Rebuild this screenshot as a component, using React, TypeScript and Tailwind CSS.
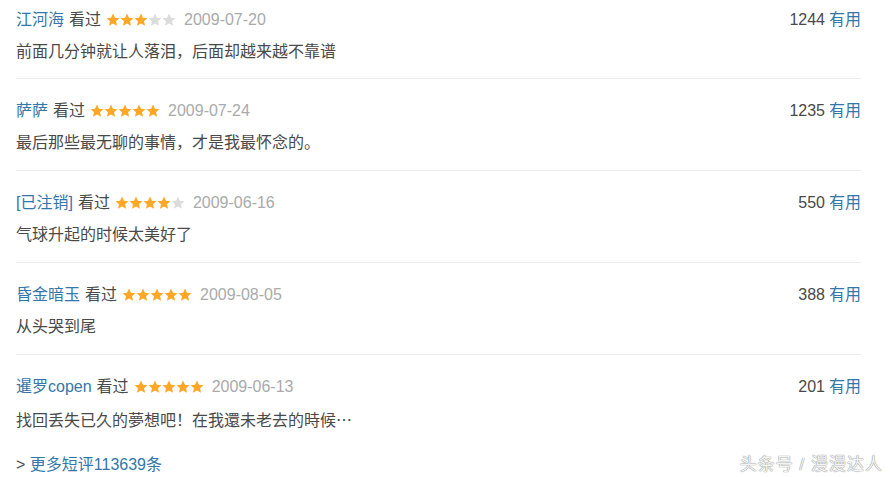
const reviews = [
  { name: "江河海", stars: 3, date: "2009-07-20", text: "前面几分钟就让人落泪，后面却越来越不靠谱", votes: 1244 },
  { name: "萨萨", stars: 5, date: "2009-07-24", text: "最后那些最无聊的事情，才是我最怀念的。", votes: 1235 },
  { name: "[已注销]", stars: 4, date: "2009-06-16", text: "气球升起的时候太美好了", votes: 550 },
  { name: "昏金暗玉", stars: 5, date: "2009-08-05", text: "从头哭到尾", votes: 388 },
  { name: "暹罗copen", stars: 5, date: "2009-06-13", text: "找回丢失已久的夢想吧！在我還未老去的時候", votes: 201, more: true },
];

function Stars({ count }: { count: number }) {
  return (
    <span className="flex items-center">
      {[0, 1, 2, 3, 4].map((i) => (
        <svg key={i} width="14" height="14" viewBox="0 1 24 22">
          <path
            d="M12 1l3.3 7.2 7.7.8-5.8 5.2 1.7 7.7L12 18l-6.9 3.9 1.7-7.7L1 9l7.7-.8z"
            fill={i < count ? "#ffa726" : "#dcdcdc"}
          />
        </svg>
      ))}
    </span>
  );
}

export default function App() {
  return (
    <div
      className="w-[894px] h-[477px] bg-white overflow-hidden pl-4 pr-[33px] text-[16px] leading-6 text-[#333]"
      style={{ fontFamily: '"Liberation Sans", "Noto Sans CJK SC", sans-serif' }}
    >
      {reviews.map((r, idx) => (
        <div
          key={r.name}
          className={
            idx === 0
              ? "pt-2 pb-[14px] border-b border-[#eeeeee]"
              : idx === reviews.length - 1
              ? "pt-5"
              : "pt-5 pb-[15px] border-b border-[#eeeeee]"
          }
        >
          <div className="flex items-center justify-between">
            <div className="flex items-center gap-[5px]">
              <span className="text-[#3377aa]">{r.name}</span>
              <span className="text-[#494949]">看过</span>
              <Stars count={r.stars} />
              <span className="text-[#aaaaaa] ml-[3px]">{r.date}</span>
            </div>
            <div>
              <span className="text-[#494949]">{r.votes}</span>
              <span className="text-[#3377aa] ml-1">有用</span>
            </div>
          </div>
          <p className="mt-2 text-[#494949]">
            {r.text}
            {r.more && <span style={{ fontFamily: '"Noto Sans CJK SC", sans-serif' }}>⋯</span>}
          </p>
        </div>
      ))}
      <div className="flex items-center justify-between mt-5">
        <div>
          <span className="text-[#494949]">&gt; </span>
          <span className="text-[#3377aa]">更多短评113639条</span>
        </div>
        <span
          className="text-[#f4f4f4] text-[17px] tracking-[1px] whitespace-pre mr-[-22px]"
          style={{ textShadow: "0 0 1px #8a8a8a, 0 0 1px #8a8a8a" }}
        >
          {"头条号 / 漫漫达人"}
        </span>
      </div>
    </div>
  );
}
